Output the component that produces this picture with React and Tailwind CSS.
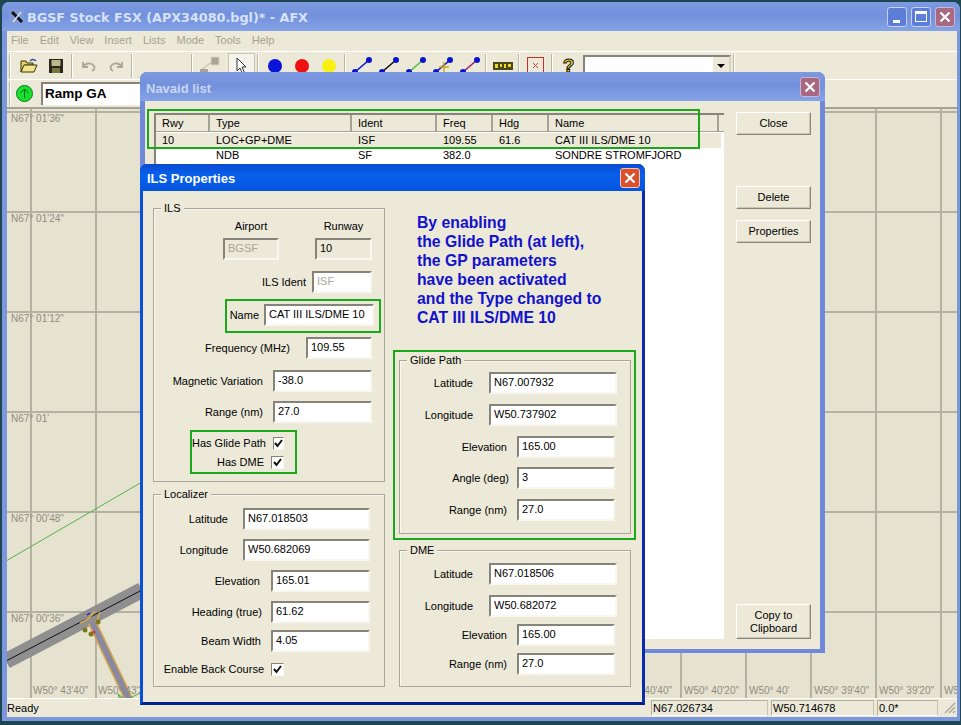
import React from "react";

const GREEN = "border-[#1aa81a]";

const INACTIVE_TITLE = "bg-[linear-gradient(180deg,#7d99e0_0%,#7390dc_45%,#85a3e6_100%)]";

function CloseBtn({ active }) {
  return (
    <div
      className={`w-[20px] h-[20px] rounded-[3px] border flex items-center justify-center ${
        active ? "bg-[#d9512f] border-[#f0c8b8]" : "bg-[#a8687f] border-[#c8b8d8]"
      }`}
    >
      <svg width="12" height="12" viewBox="0 0 12 12">
        <path d="M1.5 1.5L10.5 10.5M10.5 1.5L1.5 10.5" stroke="#fff" strokeWidth="2.2" />
      </svg>
    </div>
  );
}

function Sep() {
  return <div className="mx-[2px] h-[24px] w-[2px] border-l border-r border-l-[#b9b6a4] border-r-white" />;
}

function Tool({ children, className = "" }) {
  return <div className={`w-[27px] h-[24px] shrink-0 flex items-center justify-center ${className}`}>{children}</div>;
}

function Dot({ color }) {
  return <div className={`w-[14px] h-[14px] rounded-full ${color}`} />;
}

function LineTool({ stroke, cross }) {
  return (
    <svg width="24" height="20" viewBox="0 0 24 20">
      <line x1="5" y1="16" x2="19" y2="4" stroke={stroke} strokeWidth="1.6" />
      <circle cx="19" cy="4" r="3" fill="#0a14d0" />
      <circle cx="5" cy="16" r="3" fill="#0a14d0" />
      {cross && <path d="M8 11H18M13 6V17" stroke="#c8a810" strokeWidth="1.4" />}
    </svg>
  );
}

function Toolbar() {
  return (
    <div className="h-[28px] shrink-0 flex items-center border-t border-white pl-[2px]">
      <div className="w-[2px] h-[24px] border-l border-[#b9b6a4] bg-white mr-[2px]" />
      <div className="w-[2px]" />
      <Tool>
        <svg width="18" height="16" viewBox="0 0 18 16">
          <path d="M1 3h5l1 2h6v2H5L1 14z" fill="#e8d060" stroke="#3a3410" />
          <path d="M1 14l3-7h13l-3 7z" fill="#f4e488" stroke="#3a3410" />
          <path d="M10 3c2-2 4-2 6 0" fill="none" stroke="#2a4a9a" strokeWidth="1.3" />
        </svg>
      </Tool>
      <Tool>
        <svg width="16" height="16" viewBox="0 0 16 16">
          <rect x="1" y="1" width="14" height="14" fill="#26261a" />
          <rect x="3.5" y="2" width="9" height="6" fill="#b8b890" />
          <rect x="4" y="10" width="8" height="5" fill="#77773c" />
        </svg>
      </Tool>
      <Sep />
      <Tool>
        <svg width="14" height="12" viewBox="0 0 14 12">
          <path d="M1 2v5h5M1 7c2-4 8-5 11-1 1 2 0 4-2 5" fill="none" stroke="#a9a798" strokeWidth="1.8" />
        </svg>
      </Tool>
      <Tool>
        <svg width="14" height="12" viewBox="0 0 14 12">
          <path d="M13 2v5H8M13 7C11 3 5 2 2 6c-1 2 0 4 2 5" fill="none" stroke="#a9a798" strokeWidth="1.8" />
        </svg>
      </Tool>
      <Sep />
      <div className="w-[54px]" />
      <Sep />
      <Tool>
        <svg width="22" height="20" viewBox="0 0 22 20">
          <path d="M3 14L19 2" stroke="#b4b1a0" strokeWidth="1" />
          <rect x="2" y="13" width="8" height="6" fill="#a6a496" />
          <rect x="13" y="1" width="8" height="8" fill="#a6a496" stroke="#d8d5c5" />
        </svg>
      </Tool>
      <div className="ml-[6px] w-[27px] h-[25px] shrink-0 flex items-center justify-center border border-[#c8c5b4] bg-[#f4f3ec]">
        <svg width="14" height="18" viewBox="0 0 14 18">
          <path d="M2 1v13l3-3 2.5 5.5 2-1L7 10h4z" fill="#fff" stroke="#333" strokeWidth="1" />
        </svg>
      </div>
      <Sep />
      <Tool><Dot color="bg-[#0a14d8]" /></Tool>
      <Tool><Dot color="bg-[#f01010]" /></Tool>
      <Tool><Dot color="bg-[#f8f010]" /></Tool>
      <Sep />
      <Tool><LineTool stroke="#0a14d0" /></Tool>
      <Tool><LineTool stroke="#111" /></Tool>
      <Tool><LineTool stroke="#50c040" /></Tool>
      <Tool><LineTool stroke="#0a14d0" cross /></Tool>
      <Tool><LineTool stroke="#a02070" /></Tool>
      <Sep />
      <Tool>
        <svg width="20" height="8" viewBox="0 0 20 8">
          <rect width="20" height="8" fill="#4a4818" />
          <path d="M2 2h3v4H2zM7 2h2v3H7zM11 2h2v4h-2zM15 2h3v3h-3z" fill="#e8d830" />
        </svg>
      </Tool>
      <Sep />
      <Tool>
        <svg width="17" height="17" viewBox="0 0 17 17">
          <rect x="0.5" y="0.5" width="16" height="16" fill="#ece9d8" stroke="#c83030" />
          <path d="M6 6l5 5M11 6l-5 5" stroke="#d04040" strokeWidth="1" />
        </svg>
      </Tool>
      <Sep />
      <Tool>
        <span className="text-[19px] font-bold leading-none text-[#f8e020] [-webkit-text-stroke:1px_#111]">?</span>
      </Tool>
      <div className="ml-[1px] w-[148px] h-[22px] shrink-0 flex justify-end bg-white border-2 border-t-[#85837a] border-l-[#85837a] border-b-[#f5f4ee] border-r-[#d8d5c5]">
        <div className="w-[16px] h-full bg-[#ece9d8] flex items-center justify-center">
          <div className="w-0 h-0 border-x-[4px] border-x-transparent border-t-[4px] border-t-black" />
        </div>
      </div>
      <div className="ml-[2px] h-[24px] w-[2px] border-l border-r border-l-[#b9b6a4] border-r-white" />
    </div>
  );
}

const LAT_LABELS = [
  ["N67° 01'36\"", "top-[4px]"],
  ["N67° 01'24\"", "top-[104px]"],
  ["N67° 01'12\"", "top-[204px]"],
  ["N67° 01'", "top-[304px]"],
  ["N67° 00'48\"", "top-[404px]"],
  ["N67° 00'36\"", "top-[504px]"],
];

const LON_LABELS = [
  ["W50° 43'40\"", "left-[26px]"],
  ["W50° 43'20\"", "left-[91px]"],
  ["W50° 40'40\"", "left-[610px]"],
  ["W50° 40'20\"", "left-[677px]"],
  ["W50° 40'", "left-[742px]"],
  ["W50° 39'40\"", "left-[807px]"],
  ["W50° 39'20\"", "left-[872px]"],
  ["W50° 39'", "left-[937px]"],
];

function MapView() {
  const verticals = Array.from({ length: 15 }, (_, k) => 31 + 65 * k);
  const horizontals = [112, 212, 312, 412, 512, 612];
  return (
    <div className="relative flex-1 overflow-hidden bg-[#e6e2d0] border-t-2 border-[#a5a394] text-[10px] text-[#8f8d80]">
      <svg className="absolute left-0 top-0" width="950" height="591" viewBox="7 109 950 591">
        {verticals.map((x) => (
          <line key={x} x1={x} y1="108" x2={x} y2="700" stroke="#b3b1a2" strokeWidth="2" />
        ))}
        {horizontals.map((y) => (
          <line key={y} x1="6" y1={y} x2="957" y2={y} stroke="#b3b1a2" strokeWidth="2" />
        ))}
        <line x1="6" y1="561" x2="142" y2="482" stroke="#58b048" strokeWidth="1" />
        <line x1="6" y1="661" x2="142" y2="590" stroke="#8f8f8f" strokeWidth="16" />
        <line x1="6" y1="661" x2="142" y2="590" stroke="#111" strokeWidth="1" />
        <path d="M80 623C88 620 92 616 95 611M100 612C98 618 96 622 96 628" fill="none" stroke="#d8a850" strokeWidth="1.5" />
        <line x1="92" y1="622" x2="130" y2="702" stroke="#d8a850" strokeWidth="9" />
        <line x1="92" y1="622" x2="130" y2="702" stroke="#8888a0" strokeWidth="6" />
        <circle cx="85" cy="630" r="2.5" fill="#7a7a18" />
        <circle cx="98" cy="622" r="2.5" fill="#7a7a18" />
        <circle cx="91" cy="634" r="2.5" fill="#7a7a18" />
        <circle cx="94" cy="632" r="1.5" fill="#e03050" />
        <path d="M87 615l3-2" stroke="#1a20b0" strokeWidth="1.5" />
        <path d="M120 700l-2-6 8 6zM130 698l10-5" fill="#a8a8a0" stroke="#48b038" strokeWidth="1" />
      </svg>
      {LAT_LABELS.map(([text, pos]) => (
        <span key={text} className={`absolute left-[4px] leading-[12px] ${pos}`}>{text}</span>
      ))}
      {LON_LABELS.map(([text, pos]) => (
        <span key={text} className={`absolute top-[576px] leading-[12px] whitespace-nowrap ${pos}`}>{text}</span>
      ))}
    </div>
  );
}

function StatusCell({ className, children }) {
  return (
    <div className={`h-[16px] shrink-0 border border-[#b5b2a2] border-b-white border-r-[#c8c5b4] pl-[1px] leading-[14px] ${className}`}>
      {children}
    </div>
  );
}

function MainWindow() {
  return (
    <div className="absolute left-[2px] top-[2px] w-[958px] h-[719px] flex flex-col rounded-t-[7px] bg-[#7c97dc] pl-[5px] pr-[3px] pb-[4px]">
      <div className={`h-[29px] -ml-[5px] -mr-[3px] pr-[4px] shrink-0 rounded-t-[7px] flex items-center ${INACTIVE_TITLE}`}>
        <div className="ml-[7px] w-[15px] h-[15px] bg-[#7f9ad8] flex items-center justify-center">
          <svg width="14" height="14" viewBox="0 0 14 14">
            <path d="M2 2L12 12" stroke="#111" strokeWidth="3" />
            <path d="M11 2L3 12" stroke="#dfe4ee" strokeWidth="1.5" />
          </svg>
        </div>
        <span className="ml-[3px] mt-[3px] font-['DejaVu_Sans',sans-serif] text-[12.75px] font-bold text-[#d6e2f8] whitespace-nowrap">
          BGSF Stock FSX (APX34080.bgl)* - AFX
        </span>
        <div className="ml-auto mr-[1px] flex gap-[4px]">
          <div className="w-[20px] h-[20px] rounded-[3px] border border-[#c4d2f2] bg-[#5c7ed8] flex items-end pl-[5px] pb-[3px]">
            <div className="w-[7px] h-[3px] bg-white" />
          </div>
          <div className="w-[20px] h-[20px] rounded-[3px] border border-[#c4d2f2] bg-[#5c7ed8] flex items-center justify-center">
            <div className="w-[12px] h-[11px] border border-t-[3px] border-white" />
          </div>
          <CloseBtn />
        </div>
      </div>

      <div className="flex-1 min-h-0 flex flex-col bg-[#ece9d8] font-['Liberation_Sans',sans-serif] text-[11px] text-black">
        <div className="h-[20px] shrink-0 flex items-center pl-[4px] pb-[2px] gap-[11px] text-[#a5a294]">
          {["File", "Edit", "View", "Insert", "Lists", "Mode", "Tools", "Help"].map((m) => (
            <span key={m}>{m}</span>
          ))}
        </div>
        <Toolbar />
        <div className="h-[28px] shrink-0 flex items-center pl-[2px] border-t border-white">
          <div className="w-[2px] h-[24px] border-l border-[#b9b6a4] bg-white" />
          <div className="ml-[5px] w-[17px] h-[17px] rounded-full bg-[#18e030] border border-[#0a7a18] flex items-center justify-center">
            <svg width="11" height="11" viewBox="0 0 11 11">
              <path d="M5.5 10V1M1.5 5l4-4 4 4" fill="none" stroke="#0a6a18" strokeWidth="1" />
            </svg>
          </div>
          <div className="ml-[8px] w-[160px] h-[23px] bg-white border-l-2 border-t-2 border-[#85837a] pl-[2px] text-[13.5px] font-bold leading-[19px]">
            Ramp GA
          </div>
        </div>
        <MapView />
        <div className="h-[19px] shrink-0 flex items-center border-t border-white">
          <span>Ready</span>
          <div className="ml-auto flex items-center gap-[3px]">
            <StatusCell className="w-[117px]">N67.026734</StatusCell>
            <StatusCell className="w-[103px]">W50.714678</StatusCell>
            <StatusCell className="w-[61px]">0.0*</StatusCell>
            <svg className="ml-[3px] mr-[1px]" width="12" height="12" viewBox="0 0 12 12">
              <path d="M11 1L1 11M11 5L5 11M11 9L9 11" stroke="#a5a294" strokeWidth="1.2" />
            </svg>
          </div>
        </div>
      </div>
    </div>
  );
}

function Btn({ className = "", children }) {
  return (
    <div className={`w-[75px] flex items-center justify-center text-center leading-[13px] bg-[#ece9d8] border border-t-white border-l-white border-b-[#8a887a] border-r-[#8a887a] shadow-[inset_-1px_-1px_0_#c8c5b4] ${className}`}>
      {children}
    </div>
  );
}

const COLS = [
  ["Rwy", "w-[54px]"],
  ["Type", "w-[142px]"],
  ["Ident", "w-[85px]"],
  ["Freq", "w-[56px]"],
  ["Hdg", "w-[56px]"],
  ["Name", "w-[170px]"],
];

function Row({ cells, className = "" }) {
  return (
    <div className={`flex h-[15px] items-center leading-[15px] whitespace-nowrap ${className}`}>
      {cells.map((c, i) => (
        <div key={i} className={`pl-[6px] shrink-0 ${COLS[i][1]}`}>{c}</div>
      ))}
    </div>
  );
}

function NavaidDialog() {
  return (
    <div className="absolute left-[140px] top-[72px] w-[685px] h-[581px] flex flex-col rounded-t-[7px] bg-[#7088d8] px-[5px] pb-[4px] font-['Liberation_Sans',sans-serif] text-[11px] text-black">
      <div className={`h-[29px] -mx-[5px] shrink-0 rounded-t-[7px] flex items-center pl-[6px] pr-[5px] ${INACTIVE_TITLE}`}>
        <span className="mt-[4px] text-[13px] font-bold text-[#c8d6f4]">Navaid list</span>
        <div className="ml-auto"><CloseBtn /></div>
      </div>
      <div className="relative flex-1 flex bg-[#ece9d8] pt-[12px] pl-[9px] pr-[12px] pb-[10px]">
        <div className="w-[570px] h-[526px] bg-white border-t-2 border-l-2 border-[#85837a] shrink-0">
          <div className="flex h-[17px] bg-[#ece9d8] border-b border-[#a5a394] items-center">
            {COLS.map(([c, w]) => (
              <div key={c} className={`${w} shrink-0 h-full pl-[6px] leading-[16px] border-r-2 border-r-[#a5a394]`}>{c}</div>
            ))}
          </div>
          <div className="mt-[1px]">
            <Row cells={["10", "LOC+GP+DME", "ISF", "109.55", "61.6", "CAT III ILS/DME 10"]} className="bg-[#ece9d8] mr-[3px]" />
            <Row cells={["", "NDB", "SF", "382.0", "", "SONDRE STROMFJORD"]} />
          </div>
        </div>
        <div className="ml-[12px] -mt-[1px] flex flex-col shrink-0">
          <Btn className="h-[23px]">Close</Btn>
          <Btn className="h-[23px] mt-[51px]">Delete</Btn>
          <Btn className="h-[23px] mt-[11px]">Properties</Btn>
          <Btn className="h-[35px] mt-auto">Copy to<br />Clipboard</Btn>
        </div>
        {/* green marker drawn over the list header */}
        <div className={`absolute left-[2px] top-[8px] w-[553px] h-[40px] border-2 ${GREEN}`} />
      </div>
    </div>
  );
}

function Box({ className = "", disabled, plain, children }) {
  return (
    <div
      className={`h-[22px] shrink-0 pl-[3px] leading-[16px] border-2 border-t-[#85837a] border-l-[#85837a] border-b-[#f8f7f0] border-r-[#f8f7f0] ${
        disabled ? "bg-[#ece9d8] text-[#a8a698]" : plain ? "bg-[#ece9d8]" : "bg-white"
      } ${className}`}
    >
      {children}
    </div>
  );
}

function Field({ label, value, w, gap, className = "" }) {
  return (
    <div className={`flex items-center justify-end ${className}`}>
      <span className={`whitespace-nowrap ${gap}`}>{label}</span>
      <Box className={w}>{value}</Box>
    </div>
  );
}

function Check({ label, className = "" }) {
  return (
    <div className={`h-[13px] flex items-center justify-end leading-[13px] ${className}`}>
      <span className="mr-[7px] whitespace-nowrap">{label}</span>
      <div className="w-[13px] h-[13px] bg-white border border-t-[#85837a] border-l-[#85837a] border-b-[#f8f7f0] border-r-[#f8f7f0] flex items-center justify-center">
        <svg width="9" height="9" viewBox="0 0 9 9">
          <path d="M1 4l2.5 3L8 1" fill="none" stroke="#111" strokeWidth="2" />
        </svg>
      </div>
    </div>
  );
}

function Group({ title, className = "", children }) {
  return (
    <div className={`relative w-[232px] border border-[#a8a698] shadow-[inset_1px_1px_0_#f8f7f0] ${className}`}>
      <span className="absolute -top-[8px] left-[7px] bg-[#ece9d8] px-[3px] leading-[14px]">{title}</span>
      {children}
    </div>
  );
}

function IlsDialog() {
  return (
    <div className="absolute left-[140px] top-[164px] w-[505px] h-[541px] flex flex-col rounded-t-[7px] bg-[#0a3ccc] border-r-[3px] border-b-[3px] border-l-[3px] border-r-[#0d2ba8] border-b-[#002090] border-l-[#0a4fd8] font-['Liberation_Sans',sans-serif] text-[11px] text-black">
      <div className="h-[27px] -mx-[3px] shrink-0 rounded-t-[7px] flex items-center pl-[7px] pr-[5px] bg-[linear-gradient(180deg,#0a4ad0_0%,#0860ea_40%,#0454e0_100%)]">
        <span className="mt-[3px] text-[13px] font-bold text-white">ILS Properties</span>
        <div className="ml-auto"><CloseBtn active /></div>
      </div>
      <div className="flex-1 flex bg-[#ece9d8] pl-[10px]">
        <div className="w-[232px] pt-[17px] shrink-0">
          <Group title="ILS" className="h-[274px] pt-[10px]">
            <div className="flex justify-end gap-[36px] pr-[12px]">
              <div className="w-[56px]">
                <div className="text-center leading-[14px] mb-[5px]">Airport</div>
                <Box disabled>BGSF</Box>
              </div>
              <div className="w-[57px]">
                <div className="text-center leading-[14px] mb-[5px]">Runway</div>
                <Box plain>10</Box>
              </div>
            </div>
            <Field label="ILS Ident" value={<span className="text-[#a8a698]">ISF</span>} w="w-[60px] bg-[#ece9d8]" gap="mr-[6px]" className="mt-[11px] pr-[12px]" />
            <div className={`mt-[6px] ml-[71px] w-[156px] h-[34px] border-2 ${GREEN} pt-[3px] pr-[5px]`}>
              <Field label="Name" value="CAT III ILS/DME 10" w="w-[110px]" gap="mr-[5px]" />
            </div>
            <Field label="Frequency (MHz)" value="109.55" w="w-[66px]" gap="mr-[16px]" className="mt-[4px] pr-[12px]" />
            <Field label="Magnetic Variation" value="-38.0" w="w-[99px]" gap="mr-[10px]" className="mt-[11px] pr-[12px]" />
            <Field label="Range (nm)" value="27.0" w="w-[99px]" gap="mr-[10px]" className="mt-[9px] pr-[12px]" />
            <div className={`mt-[7px] ml-[36px] w-[107px] h-[44px] border-2 ${GREEN} pt-[5px] pr-[11px]`}>
              <Check label="Has Glide Path" />
              <Check label="Has DME" className="mt-[6px]" />
            </div>
          </Group>
          <Group title="Localizer" className="mt-[12px] h-[193px] pt-[13px]">
            <Field label="Latitude" value="N67.018503" w="w-[127px]" gap="mr-[15px]" className="pr-[14px]" />
            <Field label="Longitude" value="W50.682069" w="w-[127px]" gap="mr-[15px]" className="mt-[9px] pr-[14px]" />
            <Field label="Elevation" value="165.01" w="w-[99px]" gap="mr-[11px]" className="mt-[9px] pr-[14px]" />
            <Field label="Heading (true)" value="61.62" w="w-[99px]" gap="mr-[9px]" className="mt-[9px] pr-[14px]" />
            <Field label="Beam Width" value="4.05" w="w-[99px]" gap="mr-[10px]" className="mt-[7px] pr-[14px]" />
            <Check label="Enable Back Course" className="mt-[11px] pr-[100px]" />
          </Group>
        </div>

        <div className="ml-[8px] w-[243px] pt-[22px] shrink-0">
          <div className="ml-[24px] h-[113px] text-[15.75px] font-bold leading-[19px] text-[#1212cc] whitespace-nowrap">
            By enabling<br />
            the Glide Path (at left),<br />
            the GP parameters<br />
            have been activated<br />
            and the Type changed to<br />
            CAT III ILS/DME 10
          </div>
          <div className={`mt-[24px] w-[243px] border-2 ${GREEN} pt-[8px] pl-[4px] pb-[4px]`}>
            <Group title="Glide Path" className="h-[174px] pt-[11px]">
              <Field label="Latitude" value="N67.007932" w="w-[128px]" gap="mr-[16px]" className="pr-[13px]" />
              <Field label="Longitude" value="W50.737902" w="w-[128px]" gap="mr-[16px]" className="mt-[10px] pr-[13px]" />
              <Field label="Elevation" value="165.00" w="w-[98px]" gap="mr-[10px]" className="mt-[10px] pr-[15px]" />
              <Field label="Angle (deg)" value="3" w="w-[98px]" gap="mr-[8px]" className="mt-[9px] pr-[15px]" />
              <Field label="Range (nm)" value="27.0" w="w-[98px]" gap="mr-[10px]" className="mt-[10px] pr-[15px]" />
            </Group>
          </div>
          <Group title="DME" className="mt-[10px] ml-[6px] h-[137px] pt-[12px]">
            <Field label="Latitude" value="N67.018506" w="w-[128px]" gap="mr-[16px]" className="pr-[13px]" />
            <Field label="Longitude" value="W50.682072" w="w-[128px]" gap="mr-[16px]" className="mt-[10px] pr-[13px]" />
            <Field label="Elevation" value="165.00" w="w-[98px]" gap="mr-[10px]" className="mt-[7px] pr-[15px]" />
            <Field label="Range (nm)" value="27.0" w="w-[98px]" gap="mr-[10px]" className="mt-[7px] pr-[15px]" />
          </Group>
        </div>
      </div>
    </div>
  );
}

export default function App() {
  return (
    <div className="relative w-[961px] h-[725px] overflow-hidden bg-[#1d4650]">
      <MainWindow />
      <NavaidDialog />
      <IlsDialog />
    </div>
  );
}
